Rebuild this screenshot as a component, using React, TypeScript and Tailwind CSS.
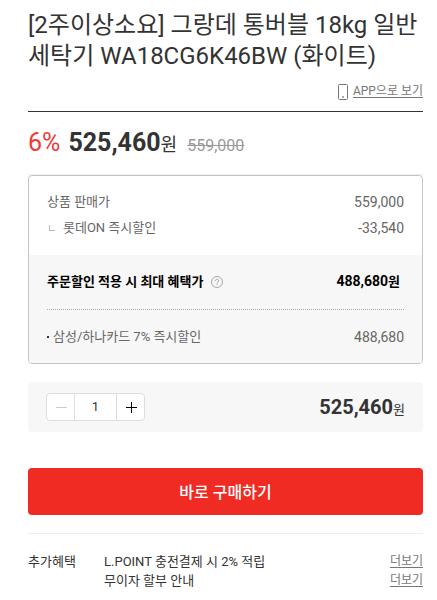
import { useState } from "react";

const UNIT_PRICE = 525460;

const benefits = ["L.POINT 충전결제 시 2% 적립", "무이자 할부 안내"];

const formatPrice = (value: number) => value.toLocaleString("en-US");

const PhoneIcon = () => (
  <svg className="h-4 w-3" viewBox="0 0 12 16" fill="none" aria-hidden="true">
    <rect x="1.5" y="0.5" width="9" height="15" rx="1" stroke="#777" />
    <rect x="5" y="12" width="2" height="2" fill="#aaa" />
  </svg>
);

const HelpIcon = () => (
  <svg className="h-3 w-3" viewBox="0 0 12 12" fill="none" stroke="#a8a8a8" aria-hidden="true">
    <circle cx="6" cy="6" r="5.5" />
    <path d="M4.4 4.8a1.6 1.6 0 1 1 2.4 1.4c-.6.3-.8.6-.8 1.2M6 8.2v1" />
  </svg>
);

const PriceSummary = () => (
  <section className="overflow-hidden rounded border border-[#c4c4c4] text-[13px] leading-5 text-[#666]">
    <div className="space-y-1.5 px-[18px] pt-4 pb-[17px]">
      <div className="flex items-center justify-between">
        <span>상품 판매가</span>
        <span className="text-sm">559,000</span>
      </div>
      <div className="flex items-center justify-between">
        <span className="flex items-center gap-2">
          <span className="ml-0.5 h-[6px] w-[6px] border-b border-l border-[#bbb]" />
          롯데ON 즉시할인
        </span>
        <span className="text-sm">-33,540</span>
      </div>
    </div>
    <div className="bg-[#f7f7f7] px-[18px] py-4">
      <div className="flex items-center justify-between pb-[17px] font-bold text-black">
        <span className="flex items-center gap-2">
          주문할인 적용 시 최대 혜택가
          <button type="button" aria-label="혜택가 안내">
            <HelpIcon />
          </button>
        </span>
        <span className="pr-1">
          <span className="text-sm">488,680</span>원
        </span>
      </div>
      <div className="flex items-center justify-between border-t border-dotted border-[#aaa] pt-[17px]">
        <span className="flex items-center gap-1">
          <span className="h-0.5 w-0.5 bg-[#333]" />
          삼성/하나카드 7% 즉시할인
        </span>
        <span className="text-sm">488,680</span>
      </div>
    </div>
  </section>
);

const App = () => {
  const [quantity, setQuantity] = useState(1);

  return (
    <main className="bg-white pt-2.5 pr-3.5 pb-2 pl-7 font-['Roboto','Noto_Sans_CJK_KR',sans-serif] text-[#333]">
      <h1 className="text-2xl leading-[31px]">
        [2주이상소요] 그랑데 통버블 18kg 일반세탁기 WA18CG6K46BW (화이트)
      </h1>

      <div className="flex items-center justify-end gap-1 border-b border-[#333] pt-[11px] pb-[11px]">
        <PhoneIcon />
        <a href="#app" className="text-xs leading-[17px] text-[#777] underline underline-offset-2">
          APP으로 보기
        </a>
      </div>

      <div className="mt-[15px] flex items-baseline">
        <span className="text-[25px] leading-8 text-[#ee3a36]">6%</span>
        <strong className="ml-2 text-[25px] leading-8 font-bold">525,460</strong>
        <span className="text-lg leading-8">원</span>
        <del className="ml-2.5 text-base leading-8 text-[#999]">559,000</del>
      </div>

      <div className="mt-3 border-t border-[#eee]">
        <PriceSummary />
      </div>

      <div className="mt-[18px] flex items-center justify-between rounded bg-[#f7f7f7] px-[18px] py-[11px]">
        <div className="flex h-7 overflow-hidden rounded border border-[#ddd] bg-white">
          <button
            type="button"
            aria-label="수량 감소"
            className="flex w-[27px] items-center justify-center text-[#ccc]"
            onClick={() => setQuantity((prev) => Math.max(1, prev - 1))}
          >
            <svg className="h-3 w-3" viewBox="0 0 12 12" stroke="currentColor" aria-hidden="true">
              <path d="M1 6.5h11" />
            </svg>
          </button>
          <input
            aria-label="수량"
            className="w-[43px] border-x border-[#ddd] text-center text-[13px] text-[#333]"
            value={quantity}
            onChange={(e) => setQuantity(Number(e.target.value) || 1)}
          />
          <button
            type="button"
            aria-label="수량 증가"
            className="flex w-[27px] items-center justify-center text-black"
            onClick={() => setQuantity((prev) => prev + 1)}
          >
            <svg className="h-3 w-3" viewBox="0 0 12 12" stroke="currentColor" aria-hidden="true">
              <path d="M1 6.5h11M6.5 1v11" />
            </svg>
          </button>
        </div>
        <div className="flex items-baseline">
          <strong className="text-xl leading-6 font-bold">{formatPrice(UNIT_PRICE * quantity)}</strong>
          <span className="text-[13px] leading-5">원</span>
        </div>
      </div>

      <button
        type="button"
        className="mt-9 h-[47px] w-full rounded bg-[#f02b24] pt-0.5 text-base font-medium text-white"
      >
        바로 구매하기
      </button>

      <section className="mt-[18px] flex border-t border-[#eee] pt-[18px] text-[13px] leading-[19px]">
        <h2 className="w-19">추가혜택</h2>
        <ul className="flex-1">
          {benefits.map((benefit) => (
            <li key={benefit} className="flex items-center justify-between">
              {benefit}
              <a href="#more" className="text-xs leading-[19px] text-[#777] underline underline-offset-2">
                더보기
              </a>
            </li>
          ))}
        </ul>
      </section>
    </main>
  );
};

export default App;
